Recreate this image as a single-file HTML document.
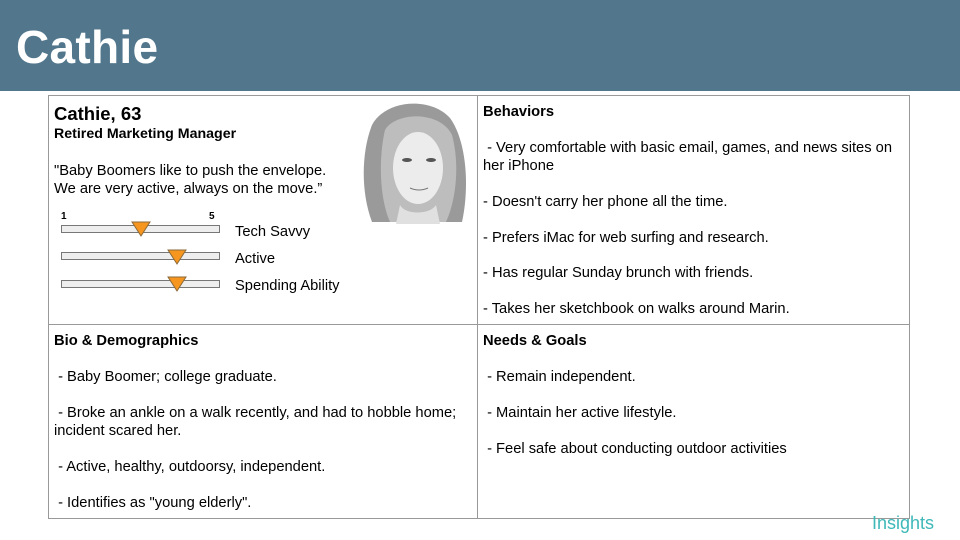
<!DOCTYPE html>
<html><head><style>
*{margin:0;padding:0;box-sizing:border-box}
body{width:960px;height:540px;background:#fff;font-family:"Liberation Sans",Arial,sans-serif;position:relative;overflow:hidden;color:#000}
.hdr{position:absolute;left:0;top:0;width:960px;height:91px;background:#52778d}
.hdr h1{position:absolute;left:16px;top:21px;font-size:46px;font-weight:bold;color:#fff;line-height:52px;letter-spacing:0.3px}
.tbl{position:absolute;left:48px;top:95px;width:862px;height:424px;border:1px solid #999}
.vl{position:absolute;left:477px;top:95px;width:1px;height:424px;background:#999}
.hl{position:absolute;left:48px;top:324px;width:862px;height:1px;background:#999}
.t{position:absolute;font-size:14.7px;line-height:18px;white-space:nowrap}
.b{font-weight:bold}
.bar{position:absolute;left:61px;width:159px;height:8px;background:#eee;border:1px solid #777}
</style></head><body>
<div class="hdr"><h1>Cathie</h1></div>
<div class="tbl"></div><div class="vl"></div><div class="hl"></div>

<div class="t b" style="left:54px;top:104px;font-size:18.5px;line-height:20px">Cathie, 63</div>
<div class="t b" style="left:54px;top:125px;font-size:14.2px">Retired Marketing Manager</div>
<div class="t" style="left:54px;top:162px">"Baby Boomers like to push the envelope.<br>We are very active, always on the move.”</div>
<div class="t b" style="left:61px;top:211px;font-size:10px;line-height:12px">1</div>
<div class="t b" style="left:209px;top:211px;font-size:10px;line-height:12px">5</div>
<div class="bar" style="top:225px"></div>
<div class="bar" style="top:252px"></div>
<div class="bar" style="top:280px"></div>
<svg style="position:absolute;left:0;top:0" width="480" height="300">
<polygon points="132,222 150,222 141,236" fill="#f7961e" stroke="#8a6a3a" stroke-width="1"/>
<polygon points="168,250 186,250 177,264" fill="#f7961e" stroke="#8a6a3a" stroke-width="1"/>
<polygon points="168,277 186,277 177,291" fill="#f7961e" stroke="#8a6a3a" stroke-width="1"/>
<g>
<path d="M372,222 C360,190 362,150 372,125 C385,100 430,96 450,118 C466,140 470,185 462,222 Z" fill="#9a9a9a"/>
<path d="M390,222 C380,200 378,160 385,130 C395,112 440,110 452,135 C460,165 456,200 446,222 Z" fill="#bdbdbd"/>
<ellipse cx="418" cy="168" rx="25" ry="36" fill="#ececec"/>
<path d="M400,205 C405,215 430,215 436,205 L440,224 L396,224 Z" fill="#e0e0e0"/>
<ellipse cx="407" cy="160" rx="5" ry="2" fill="#555"/>
<ellipse cx="431" cy="160" rx="5" ry="2" fill="#555"/>
<path d="M410,188 Q419,192 428,188" stroke="#777" fill="none"/>
</g>
</svg>
<div class="t" style="left:235px;top:223px">Tech Savvy</div>
<div class="t" style="left:235px;top:250px">Active</div>
<div class="t" style="left:235px;top:277px">Spending Ability</div>

<div class="t b" style="left:483px;top:103px">Behaviors</div>
<div class="t" style="left:483px;top:139px">&nbsp;- Very comfortable with basic email, games, and news sites on<br>her iPhone</div>
<div class="t" style="left:483px;top:193px">- Doesn't carry her phone all the time.</div>
<div class="t" style="left:483px;top:229px">- Prefers iMac for web surfing and research.</div>
<div class="t" style="left:483px;top:264px">- Has regular Sunday brunch with friends.</div>
<div class="t" style="left:483px;top:300px">- Takes her sketchbook on walks around Marin.</div>

<div class="t b" style="left:54px;top:332px">Bio &amp; Demographics</div>
<div class="t" style="left:54px;top:368px">&nbsp;- Baby Boomer; college graduate.</div>
<div class="t" style="left:54px;top:404px">&nbsp;- Broke an ankle on a walk recently, and had to hobble home;<br>incident scared her.</div>
<div class="t" style="left:54px;top:458px">&nbsp;- Active, healthy, outdoorsy, independent.</div>
<div class="t" style="left:54px;top:494px">&nbsp;- Identifies as "young elderly".</div>

<div class="t b" style="left:483px;top:332px">Needs &amp; Goals</div>
<div class="t" style="left:483px;top:368px">&nbsp;- Remain independent.</div>
<div class="t" style="left:483px;top:404px">&nbsp;- Maintain her active lifestyle.</div>
<div class="t" style="left:483px;top:440px">&nbsp;- Feel safe about conducting outdoor activities</div>

<div class="t" style="left:872px;top:513px;font-size:18px;line-height:20px;color:#3fb8b8">Insights</div>
</body></html>
